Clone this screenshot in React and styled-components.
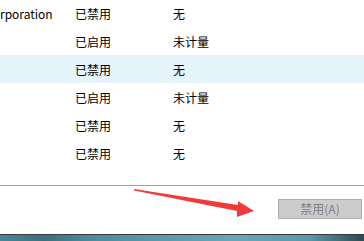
import React from 'react';
import styled, { createGlobalStyle } from 'styled-components';

const GlobalStyle = createGlobalStyle`
  html, body {
    margin: 0;
    padding: 0;
    background: #ffffff;
    overflow: hidden;
  }
  body {
    font-family: "Noto Sans CJK SC", "Noto Sans", sans-serif;
  }
`

const Window = styled.div`
  position: relative;
  width: 364px;
  height: 241px;
  display: flex;
  flex-direction: column;
  background: #ffffff;
  overflow: hidden;
`

const List = styled.div`
  height: 186px;
  box-sizing: border-box;
  border-bottom: 1px solid #a0a0a0;
  overflow: hidden;
`

const Rows = styled.div`
  margin-top: -1px;
`

const Row = styled.div`
  display: grid;
  grid-template-columns: 75px 98px 1fr;
  align-items: center;
  height: 28px;
  font-size: 12px;
  color: #000000;
  background: ${p => (p.selected ? '#e5f3fb' : 'transparent')};
`

const Cell = styled.span`
  white-space: nowrap;
  overflow: hidden;
`

const Footer = styled.div`
  flex: 1;
  display: flex;
  align-items: center;
  justify-content: flex-end;
  padding-right: 2px;
`

const Button = styled.button`
  width: 84px;
  height: 20px;
  margin-top: -2px;
  padding: 0;
  border: 1px solid #adadad;
  background: #cccccc;
  color: #7c7f88;
  font-family: "Noto Sans CJK SC", "Noto Sans", sans-serif;
  font-size: 12px;
  line-height: 18px;
`

const Desktop = styled.div`
  height: 7px;
  box-sizing: border-box;
  border-top: 1px solid #363a3b;
  background: linear-gradient(90deg, #4b8597 0%, #3f6f7c 12%, #4f8a9c 25%, #5e9aab 45%, #6aa6b3 65%, #5b97a6 85%, #2f4a52 100%);
`

const Arrow = styled.svg`
  position: absolute;
  left: 0;
  top: 0;
  pointer-events: none;
`

const rows = [
  { name: 'rporation', state: '已禁用', meter: '无' },
  { name: '', state: '已启用', meter: '未计量' },
  { name: '', state: '已禁用', meter: '无', selected: true },
  { name: '', state: '已启用', meter: '未计量' },
  { name: '', state: '已禁用', meter: '无' },
  { name: '', state: '已禁用', meter: '无' },
]

const App = () => {
  return (
    <Window>
      <GlobalStyle />
      <List>
        <Rows>
          {rows.map((r, i) => (
            <Row key={i} selected={r.selected}>
              <Cell>{r.name}</Cell>
              <Cell>{r.state}</Cell>
              <Cell>{r.meter}</Cell>
            </Row>
          ))}
        </Rows>
      </List>
      <Footer>
        <Button disabled>禁用(A)</Button>
      </Footer>
      <Desktop />
      {/* red annotation arrow */}
      <Arrow width="364" height="241" viewBox="0 0 364 241">
        <polygon
          points="134,189 238,205 238,201 254,211 237,217 237,211 134,190.5"
          fill="#f23a3a"
        />
      </Arrow>
    </Window>
  )
}

export default App;
